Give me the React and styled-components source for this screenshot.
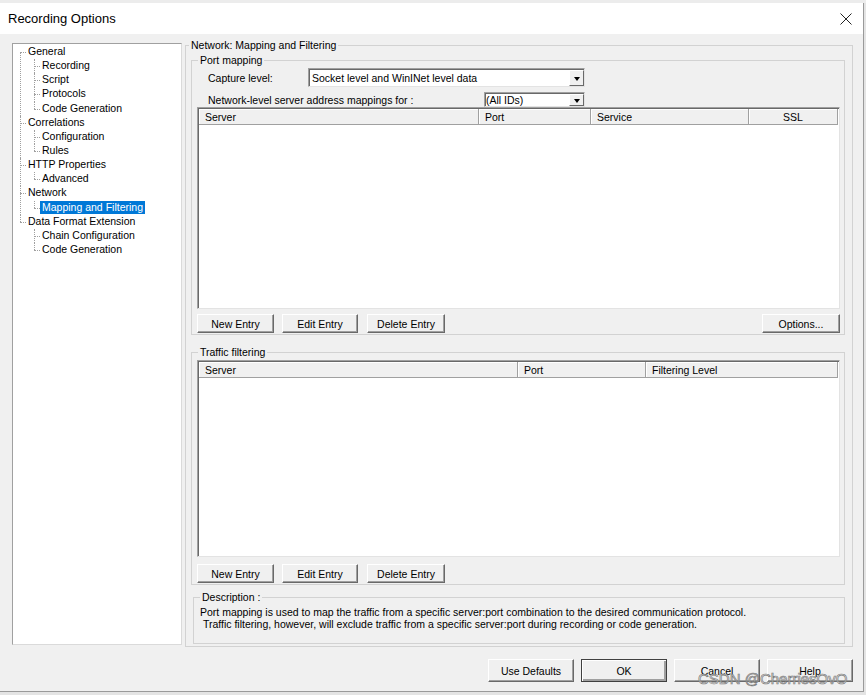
import styled, { createGlobalStyle } from "styled-components";

const GlobalStyle = createGlobalStyle`
  html, body {
    margin: 0;
    padding: 0;
  }
  body {
    width: 866px;
    height: 695px;
    overflow: hidden;
    background: #e4e4e4;
    font-family: "Liberation Sans", Arial, sans-serif;
    font-size: 10.5px;
    color: #000;
  }
`;

const treeData = [
  { label: "General", children: ["Recording", "Script", "Protocols", "Code Generation"] },
  { label: "Correlations", children: ["Configuration", "Rules"] },
  { label: "HTTP Properties", children: ["Advanced"] },
  { label: "Network", children: ["Mapping and Filtering"] },
  { label: "Data Format Extension", children: ["Chain Configuration", "Code Generation"] },
];

const portColumns = [
  { name: "Server", width: 280 },
  { name: "Port", width: 112 },
  { name: "Service", width: 158 },
  { name: "SSL", width: 89, center: true },
];

const trafficColumns = [
  { name: "Server", width: 319 },
  { name: "Port", width: 128 },
  { name: "Filtering Level", width: 192 },
];

const App = () => {
  return (
    <Screen>
      <GlobalStyle />
      <TopStrip />
      <Window>
        <TitleBar>
          <Title>Recording Options</Title>
          <CloseIcon width="12" height="12" viewBox="0 0 12 12">
            <path d="M0.5 0.5 L11.5 11.5 M11.5 0.5 L0.5 11.5" stroke="#222" strokeWidth="1" fill="none" />
          </CloseIcon>
        </TitleBar>
        <Body>
          <MainRow>
            <TreePanel>
              <RootList>
                {treeData.map((node, i) => (
                  <RootItem key={node.label} $first={i === 0} $last={i === treeData.length - 1}>
                    <Row>
                      <NodeLabel>{node.label}</NodeLabel>
                    </Row>
                    <ChildList>
                      {node.children.map((child, j) => (
                        <ChildItem key={child} $last={j === node.children.length - 1}>
                          <Row>
                            <NodeLabel $selected={child === "Mapping and Filtering"}>{child}</NodeLabel>
                          </Row>
                        </ChildItem>
                      ))}
                    </ChildList>
                  </RootItem>
                ))}
              </RootList>
            </TreePanel>

            <OuterGroup>
              <Legend $ml={3}>Network: Mapping and Filtering</Legend>
              <OuterBody>
                <Group>
                  <Legend $ml={6}>Port mapping</Legend>
                  <GroupBody>
                    <FieldRow $mt={1}>
                      <FieldLabel $w={100}>Capture level:</FieldLabel>
                      <Combo $w={277} $h={19} $pl={3}>
                        <span>Socket level and WinINet level data</span>
                        <ComboArrow />
                      </Combo>
                    </FieldRow>
                    <FieldRow $mt={5}>
                      <FieldLabel $w={276}>Network-level server address mappings for :</FieldLabel>
                      <Combo $w={101} $h={15} $pl={1}>
                        <span>(All IDs)</span>
                        <ComboArrow />
                      </Combo>
                    </FieldRow>
                    <ListView $h={202}>
                      <HeaderRow>
                        {portColumns.map((c) => (
                          <HeaderCell key={c.name} $w={c.width} $center={c.center}>
                            {c.name}
                          </HeaderCell>
                        ))}
                      </HeaderRow>
                    </ListView>
                    <ButtonBar $mt={5}>
                      <Button $w={77}>New Entry</Button>
                      <Button $w={76}>Edit Entry</Button>
                      <Button $w={78}>Delete Entry</Button>
                      <Spacer />
                      <Button $w={78}>Options...</Button>
                    </ButtonBar>
                  </GroupBody>
                </Group>

                <Group $mt={11}>
                  <Legend $ml={6}>Traffic filtering</Legend>
                  <GroupBody>
                    <ListView $h={197} $mt={1}>
                      <HeaderRow>
                        {trafficColumns.map((c) => (
                          <HeaderCell key={c.name} $w={c.width}>
                            {c.name}
                          </HeaderCell>
                        ))}
                      </HeaderRow>
                    </ListView>
                    <ButtonBar $mt={7}>
                      <Button $w={77}>New Entry</Button>
                      <Button $w={76}>Edit Entry</Button>
                      <Button $w={78}>Delete Entry</Button>
                    </ButtonBar>
                  </GroupBody>
                </Group>

                <Group $mt={6} $ml={2}>
                  <Legend $ml={6}>Description :</Legend>
                  <DescText>
                    <div>Port mapping is used to map the traffic from a specific server:port combination to the desired communication protocol.</div>
                    <div>&nbsp;Traffic filtering, however, will exclude traffic from a specific server:port during recording or code generation.</div>
                  </DescText>
                </Group>
              </OuterBody>
            </OuterGroup>
          </MainRow>

          <Footer>
            <Button $w={86} $h={23}>Use Defaults</Button>
            <Button $w={86} $h={23} $default>OK</Button>
            <Button $w={86} $h={23}>Cancel</Button>
            <Button $w={86} $h={23}>Help</Button>
          </Footer>
        </Body>
        <Watermark>CSDN @CherriesOvO</Watermark>
      </Window>
    </Screen>
  );
};

export default App;

const Screen = styled.div`
  width: 866px;
  height: 695px;
  display: flex;
  flex-direction: column;
`;

const TopStrip = styled.div`
  height: 3px;
  background: #ececec;
`;

const Window = styled.div`
  position: relative;
  width: 863px;
  display: flex;
  flex-direction: column;
  border-right: 1px solid #9a9a9a;
  border-bottom: 1px solid #9a9a9a;
  background: #f0f0f0;
`;

const TitleBar = styled.div`
  height: 31px;
  display: flex;
  align-items: center;
  justify-content: space-between;
  padding: 0 11px 0 8px;
  background: #ffffff;
`;

const Title = styled.div`
  font-size: 13px;
  color: #000;
`;

const CloseIcon = styled.svg`
  display: block;
`;

const Body = styled.div`
  height: 657px;
  display: flex;
  flex-direction: column;
  padding: 0 10px 0 12px;
  box-sizing: border-box;
`;

const MainRow = styled.div`
  display: flex;
  align-items: flex-start;
  gap: 3px;
`;

const TreePanel = styled.div`
  width: 170px;
  height: 602px;
  margin-top: 9px;
  box-sizing: border-box;
  background: #ffffff;
  border: 1px solid;
  border-color: #a0a0a0 #dadada #dadada #a0a0a0;
  overflow: hidden;
`;

const RootList = styled.ul`
  list-style: none;
  margin: 0;
  padding: 1px 0 0 0;
`;

const RootItem = styled.li`
  position: relative;
  padding-left: 13px;
  &::before {
    content: "";
    position: absolute;
    left: 7px;
    top: ${(p) => (p.$first ? "7px" : "0")};
    ${(p) => (p.$last ? "height: 7px;" : "bottom: 0;")}
    border-left: 1px dotted #a0a0a0;
  }
  &::after {
    content: "";
    position: absolute;
    left: 7px;
    top: 7px;
    width: 6px;
    border-top: 1px dotted #a0a0a0;
  }
`;

const ChildList = styled.ul`
  list-style: none;
  margin: 0;
  padding: 0;
`;

const ChildItem = styled.li`
  position: relative;
  padding-left: 14px;
  &::before {
    content: "";
    position: absolute;
    left: 8px;
    top: 0;
    ${(p) => (p.$last ? "height: 7px;" : "bottom: 0;")}
    border-left: 1px dotted #a0a0a0;
  }
  &::after {
    content: "";
    position: absolute;
    left: 8px;
    top: 7px;
    width: 6px;
    border-top: 1px dotted #a0a0a0;
  }
`;

const Row = styled.div`
  height: 14.15px;
  white-space: nowrap;
`;

const NodeLabel = styled.span`
  display: inline-block;
  vertical-align: top;
  height: 13px;
  line-height: 13px;
  padding: 0 2px;
  background: ${(p) => (p.$selected ? "#0078d7" : "transparent")};
  color: ${(p) => (p.$selected ? "#ffffff" : "#000")};
`;

const OuterGroup = styled.fieldset`
  flex: 1;
  margin: 5px 0 0 0;
  padding: 0;
  border: 1px solid #d2d2d2;
  min-width: 0;
`;

const Legend = styled.legend`
  margin-left: ${(p) => p.$ml}px;
  padding: 0 2px;
  font-size: 10.5px;
  line-height: 13px;
`;

const OuterBody = styled.div`
  padding: 2px 7px 2px 5px;
`;

const Group = styled.fieldset`
  margin: ${(p) => p.$mt || 0}px 0 0 ${(p) => p.$ml || 0}px;
  padding: 0;
  border: 1px solid #d2d2d2;
  min-width: 0;
`;

const GroupBody = styled.div`
  padding: 0 4px 1px 5px;
`;

const FieldRow = styled.div`
  display: flex;
  align-items: center;
  margin-top: ${(p) => p.$mt}px;
  padding-left: 11px;
`;

const FieldLabel = styled.div`
  width: ${(p) => p.$w}px;
  flex-shrink: 0;
  white-space: nowrap;
`;

const Combo = styled.div`
  position: relative;
  width: ${(p) => p.$w}px;
  height: ${(p) => p.$h}px;
  box-sizing: border-box;
  display: flex;
  align-items: center;
  padding-left: ${(p) => p.$pl}px;
  background: #ffffff;
  border: 1px solid;
  border-color: #a0a0a0 #e3e3e3 #e3e3e3 #a0a0a0;
  box-shadow: inset 1px 1px 0 #696969;
  white-space: nowrap;
  span {
    flex: 1;
  }
`;

const ComboArrow = styled.div`
  width: 15px;
  align-self: stretch;
  margin: 1px 0 0 0;
  box-sizing: border-box;
  background: #f0f0f0;
  border: 1px solid;
  border-color: #ffffff #696969 #696969 #ffffff;
  display: flex;
  align-items: center;
  justify-content: center;
  &::after {
    content: "";
    border-left: 3.5px solid transparent;
    border-right: 3.5px solid transparent;
    border-top: 4px solid #000;
    margin-top: 1px;
  }
`;

const ListView = styled.div`
  height: ${(p) => p.$h}px;
  margin-top: ${(p) => p.$mt || 0}px;
  box-sizing: border-box;
  background: #ffffff;
  border: 1px solid;
  border-color: #a0a0a0 #e3e3e3 #e3e3e3 #a0a0a0;
  box-shadow: inset 1px 1px 0 #696969;
  padding: 1px 0 0 1px;
`;

const HeaderRow = styled.div`
  display: flex;
  height: 16px;
`;

const HeaderCell = styled.div`
  width: ${(p) => p.$w}px;
  flex-shrink: 0;
  box-sizing: border-box;
  background: #f0f0f0;
  border-right: 1px solid #a0a0a0;
  border-bottom: 1px solid #a0a0a0;
  box-shadow: inset 1px 1px 0 #ffffff;
  line-height: 16px;
  padding-left: ${(p) => (p.$center ? 0 : 6)}px;
  text-align: ${(p) => (p.$center ? "center" : "left")};
  white-space: nowrap;
`;

const ButtonBar = styled.div`
  display: flex;
  gap: 7px;
  margin-top: ${(p) => p.$mt}px;
  & > :nth-child(2) {
    margin-left: 1px;
  }
  & > :nth-child(3) {
    margin-left: 2px;
  }
`;

const Spacer = styled.div`
  flex: 1;
`;

const Button = styled.div`
  width: ${(p) => p.$w}px;
  height: ${(p) => p.$h || 19}px;
  box-sizing: border-box;
  display: flex;
  align-items: center;
  justify-content: center;
  background: #f0f0f0;
  border: 1px solid;
  border-color: ${(p) => (p.$default ? "#404040" : "#ffffff #696969 #696969 #ffffff")};
  box-shadow: ${(p) =>
    p.$default
      ? "inset 1px 1px 0 #ffffff, inset -2px -2px 0 #a0a0a0"
      : "inset -1px -1px 0 #a0a0a0"};
  font-size: 10.5px;
  white-space: nowrap;
`;

const DescText = styled.div`
  padding: 2px 0 13px 6px;
  line-height: 12px;
  white-space: nowrap;
`;

const Footer = styled.div`
  display: flex;
  justify-content: flex-end;
  gap: 7px;
  margin-top: 12px;
`;

const Watermark = styled.div`
  position: absolute;
  left: 698px;
  top: 667px;
  font-size: 15px;
  line-height: 17px;
  color: rgba(240, 240, 240, 0.6);
  -webkit-text-stroke: 0.7px #7a7a7a;
  white-space: nowrap;
  pointer-events: none;
`;
